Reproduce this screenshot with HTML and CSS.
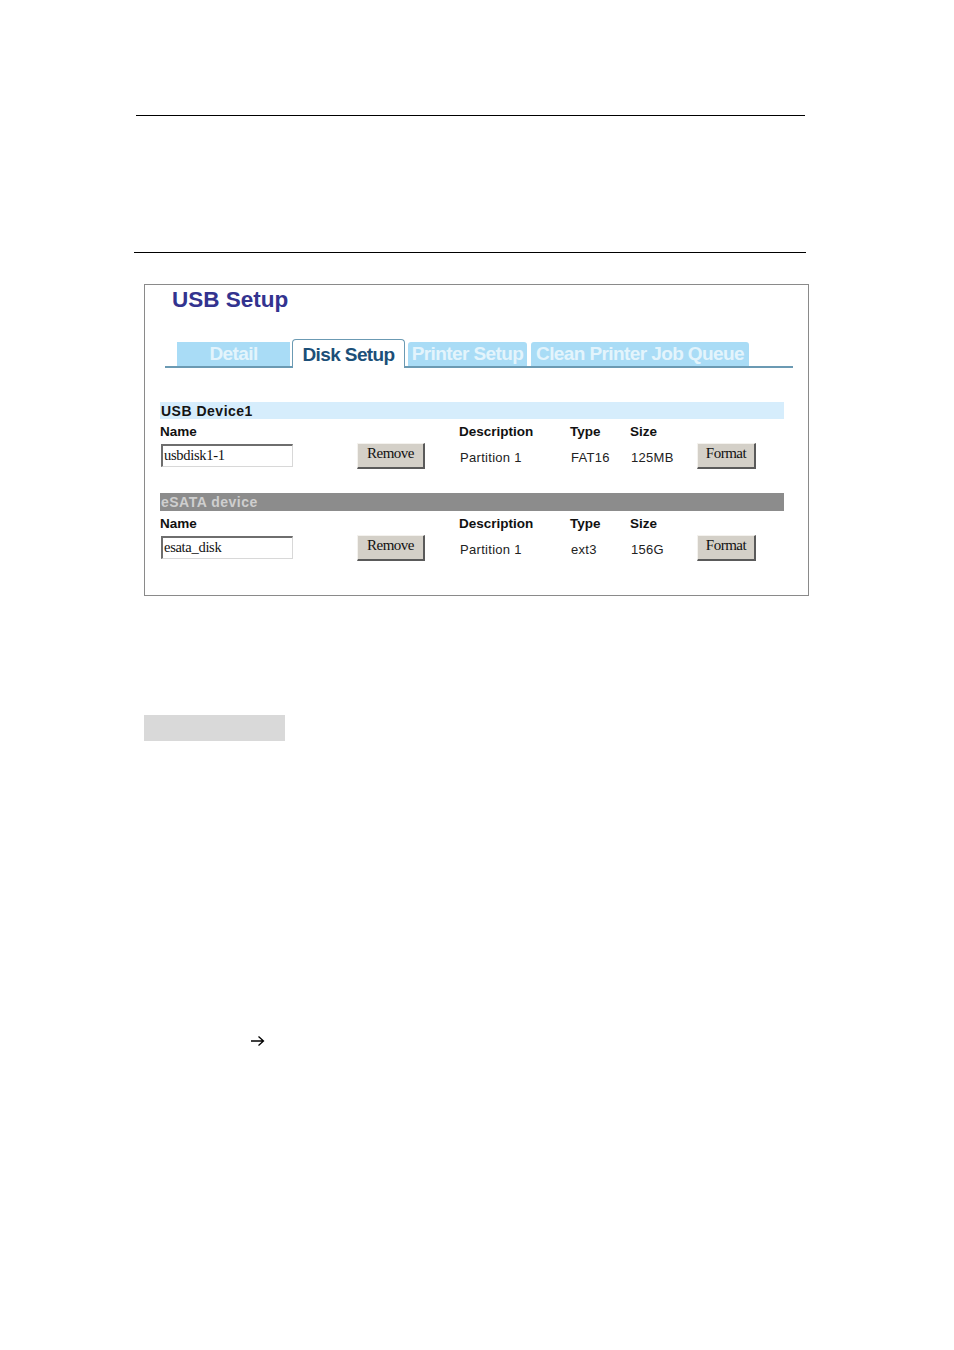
FILE: index.html
```html
<!DOCTYPE html>
<html>
<head>
<meta charset="utf-8">
<link rel="stylesheet" href="styles.css">
</head>
<body>
<div class="page">
  <div class="rule rule1"></div>
  <div class="rule rule2"></div>
  <div class="panel">
    <div class="title">USB Setup</div>
    <div class="tabs">
      <div class="tab tab-detail">Detail</div>
      <div class="tab active">Disk Setup</div>
      <div class="tab tab-printer">Printer Setup</div>
      <div class="tab tab-clean">Clean Printer Job Queue</div>
    </div>
    <div class="section sec-usb">
      <div class="sec-head head-usb">USB Device1</div>
      <div class="grid">
        <div class="lbl">Name</div><div></div><div class="lbl">Description</div><div class="lbl">Type</div><div class="lbl">Size</div><div></div>
        <div class="cell"><div class="input">usbdisk1-1</div></div>
        <div class="cell"><div class="btn btn-remove">Remove</div></div>
        <div class="cell val">Partition 1</div>
        <div class="cell val">FAT16</div>
        <div class="cell val">125MB</div>
        <div class="cell"><div class="btn btn-format">Format</div></div>
      </div>
    </div>
    <div class="section sec-esata">
      <div class="sec-head head-esata">eSATA device</div>
      <div class="grid">
        <div class="lbl">Name</div><div></div><div class="lbl">Description</div><div class="lbl">Type</div><div class="lbl">Size</div><div></div>
        <div class="cell"><div class="input">esata_disk</div></div>
        <div class="cell"><div class="btn btn-remove">Remove</div></div>
        <div class="cell val">Partition 1</div>
        <div class="cell val">ext3</div>
        <div class="cell val">156G</div>
        <div class="cell"><div class="btn btn-format">Format</div></div>
      </div>
    </div>
  </div>
  <div class="graybox"></div>
  <div class="arrow"><svg width="15" height="12" viewBox="0 0 15 12"><path d="M1 6 H13.5 M8.5 1.5 L13.5 6 L8.5 10.5" fill="none" stroke="#000" stroke-width="1.3"/></svg></div>
</div>
</body>
</html>
```
FILE: styles.css
```css
html, body {
  margin: 0;
  padding: 0;
  background: #ffffff;
}
.page {
  width: 954px;
  height: 1350px;
  position: relative;
  font-family: "Liberation Sans", Arial, sans-serif;
  display: flex;
  flex-direction: column;
}
.rule {
  height: 1px;
  background: #000;
}
.rule1 {
  margin: 115px 0 0 136px;
  width: 669px;
}
.rule2 {
  margin: 136px 0 0 134px;
  width: 672px;
}
.panel {
  margin: 31px 0 0 144px;
  width: 663px;
  height: 310px;
  border: 1px solid #8a8a8a;
  display: flex;
  flex-direction: column;
}
.title {
  margin: 1px 0 0 27px;
  height: 28px;
  line-height: 28px;
  font-size: 22.5px;
  font-weight: bold;
  color: #33338f;
}
.tabs {
  margin: 27px 0 0 20px;
  width: 628px;
  height: 27px;
  border-bottom: 2px solid #6b9ab3;
  display: flex;
  align-items: flex-end;
  padding-left: 12px;
  box-sizing: border-box;
  gap: 2px;
}
.tab {
  height: 24px;
  line-height: 24px;
  font-size: 19px;
  font-weight: bold;
  letter-spacing: -0.6px;
  text-align: center;
  background: #a9dcf6;
  color: #e3f4fc;
  border-radius: 3px 3px 0 0;
  box-sizing: border-box;
  white-space: nowrap;
}
.tab-detail { width: 113px; border-radius: 0; }
.tab-printer { width: 119px; margin-left: 1px; }
.tab-clean { width: 218px; margin-left: 2px; }
.tab.active {
  width: 113px;
  background: #ffffff;
  color: #1c4f78;
  border: 1px solid #6b9ab3;
  border-bottom: none;
  border-radius: 4px 4px 0 0;
  margin-bottom: -2px;
  height: 29px;
  line-height: 29px;
}
.section {
  margin-left: 15px;
  width: 624px;
  display: flex;
  flex-direction: column;
}
.sec-usb { margin-top: 34px; }
.sec-esata { margin-top: 24px; }
.sec-head {
  height: 17px;
  line-height: 18px;
  font-size: 14px;
  font-weight: bold;
  padding-left: 1px;
  letter-spacing: 0.5px;
}
.head-usb {
  background: #d6edfc;
  color: #141414;
}
.head-esata {
  height: 18px;
  background: #8c8c8c;
  color: #cfcfcf;
}
.grid {
  display: grid;
  grid-template-columns: 197px 102px 111px 60px 67px 1fr;
  grid-template-rows: 23px 27px;
}
.lbl {
  font-size: 13.5px;
  font-weight: bold;
  color: #111;
  line-height: 16px;
  padding-top: 5px;
}
.cell {
  display: flex;
  align-items: center;
}
.val {
  font-size: 13px;
  color: #222;
  letter-spacing: 0.3px;
  padding-left: 1px;
  padding-top: 3px;
}
.input {
  margin-left: 1px;
  width: 132px;
  height: 23px;
  box-sizing: border-box;
  border-top: 2px solid #6e6e6e;
  border-left: 2px solid #6e6e6e;
  border-right: 1px solid #d8d8d8;
  border-bottom: 1px solid #d8d8d8;
  font-family: "Liberation Serif", "Times New Roman", serif;
  font-size: 14.5px;
  line-height: 18px;
  padding-left: 1px;
  color: #111;
  letter-spacing: -0.3px;
}
.btn {
  height: 26px;
  box-sizing: border-box;
  background: #d4d0c8;
  border-top: 1px solid #f4f2ee;
  border-left: 1px solid #f4f2ee;
  border-right: 2px solid #5a5a5a;
  border-bottom: 2px solid #5a5a5a;
  font-family: "Liberation Serif", "Times New Roman", serif;
  font-size: 15px;
  line-height: 19px;
  text-align: center;
  color: #111;
  letter-spacing: -0.5px;
}
.btn-remove { width: 68px; }
.btn-format { width: 59px; }
.graybox {
  margin: 119px 0 0 144px;
  width: 141px;
  height: 26px;
  background: #d9d9d9;
}
.arrow {
  margin: 294px 0 0 250px;
  height: 12px;
  line-height: 0;
}
```
